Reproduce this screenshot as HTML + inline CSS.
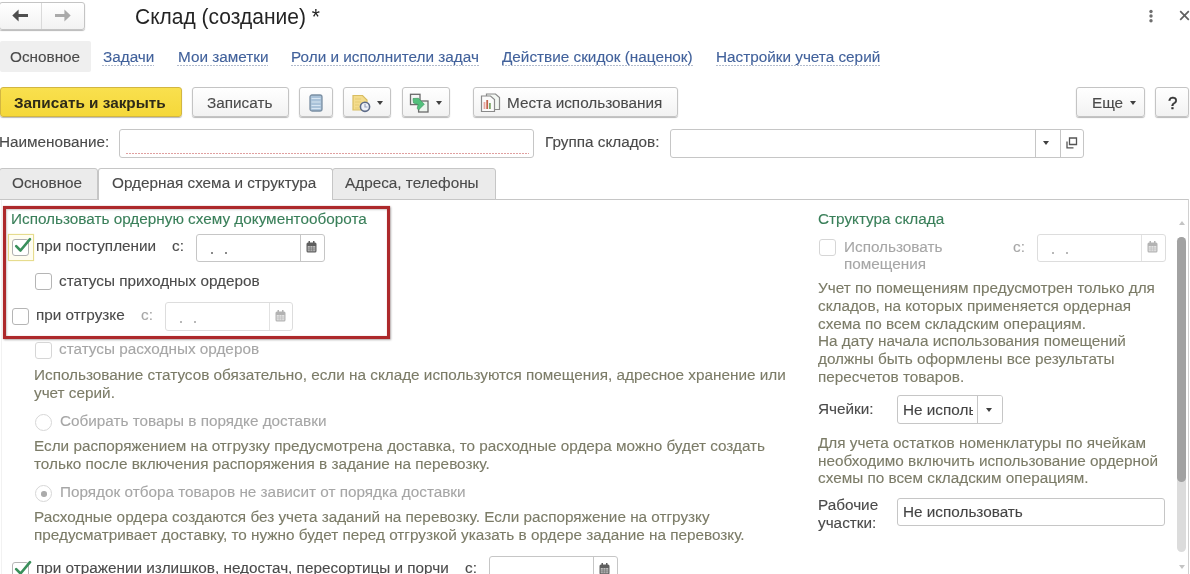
<!DOCTYPE html>
<html><head><meta charset="utf-8">
<style>
html,body{-webkit-font-smoothing:antialiased;margin:0;padding:0;background:#fff;width:1190px;height:574px;overflow:hidden;position:relative;font-family:"Liberation Sans",sans-serif;}
#root{position:absolute;left:0;top:0;width:1190px;height:574px;will-change:transform;overflow:hidden;}
.a{position:absolute;box-sizing:border-box;}
svg.a{overflow:visible;}
.t{position:absolute;white-space:nowrap;line-height:20px;font-size:15.3px;color:#4a4a4a;-webkit-text-stroke:0.12px currentColor;}
.lnk{color:#41619b;}
.und{position:absolute;height:1px;background:repeating-linear-gradient(90deg,#b3bccd 0 2px,transparent 2px 3px);}
.btn{position:absolute;box-sizing:border-box;border:1px solid #c4c4c4;border-radius:3px;background:linear-gradient(#ffffff,#f2f2f2);box-shadow:0 1px 1px rgba(0,0,0,0.28);}
.inp{position:absolute;box-sizing:border-box;border:1px solid #c6c6c6;border-radius:3px;background:#fff;}
.inpd{border-color:#dddddd;}
.div{position:absolute;top:0;bottom:0;width:1px;background:#c6c6c6;}
.cb{position:absolute;box-sizing:border-box;border:1px solid #b5b5b5;border-radius:3px;background:#fff;width:17px;height:17px;}
.cbd{border-color:#d6d6d6;}
.desc{color:#7b7b67;}
.dis{color:#a6a6a6;}
.grn{color:#397f59;}
.tri{position:absolute;width:0;height:0;border-left:3px solid transparent;border-right:3px solid transparent;border-top:4px solid #404040;}
</style></head><body><div id="root">

<!-- nav buttons -->
<div class="btn" style="left:-1px;top:2px;width:86px;height:28px;">
  <div class="div" style="left:41px;background:#dadada"></div>
</div>
<svg class="a" style="left:12px;top:9px" width="17" height="13" viewBox="0 0 17 13"><path d="M0.3 6.5 L6.6 0.6 L6.6 5.1 L16 5.1 L16 8.1 L6.6 8.1 L6.6 12.6 Z" fill="#4f4f4f"/></svg>
<svg class="a" style="left:54px;top:9px" width="17" height="13" viewBox="0 0 17 13"><path d="M16.7 6.5 L10.4 0.6 L10.4 5.1 L1 5.1 L1 8.1 L10.4 8.1 L10.4 12.6 Z" fill="#aaaaaa"/></svg>

<div class="t" style="left:135px;top:7px;font-size:21px;color:#242424;transform:scaleY(1.04);transform-origin:0 17.3px;-webkit-text-stroke:0;">Склад (создание) *</div>

<!-- right icons -->
<svg class="a" style="left:1148px;top:9px" width="6" height="14" viewBox="0 0 6 14"><circle cx="3" cy="2.5" r="1.7" fill="#6f6f6f"/><circle cx="3" cy="7" r="1.7" fill="#6f6f6f"/><circle cx="3" cy="11.7" r="1.7" fill="#6f6f6f"/></svg>
<svg class="a" style="left:1179px;top:10px" width="11" height="11" viewBox="0 0 11 11"><path d="M1.2 1.2 L9.8 9.8 M9.8 1.2 L1.2 9.8" stroke="#606060" stroke-width="1.7"/></svg>

<!-- link bar -->
<div class="a" style="left:0;top:41px;width:91px;height:31px;background:#efefef;border-radius:2px;"></div>
<div class="t" style="left:10px;top:47px;color:#4a4a4a;">Основное</div>
<div class="t lnk" style="left:103px;top:47px;">Задачи</div><div class="und" style="left:102px;top:65px;width:52px"></div>
<div class="t lnk" style="left:178px;top:47px;">Мои заметки</div><div class="und" style="left:177px;top:65px;width:91px"></div>
<div class="t lnk" style="left:291px;top:47px;">Роли и исполнители задач</div><div class="und" style="left:291px;top:65px;width:188px"></div>
<div class="t lnk" style="left:502px;top:47px;">Действие скидок (наценок)</div><div class="und" style="left:502px;top:65px;width:191px"></div>
<div class="t lnk" style="left:716px;top:47px;">Настройки учета серий</div><div class="und" style="left:716px;top:65px;width:165px"></div>

<!-- toolbar -->
<div class="btn" style="left:0;top:87px;width:182px;height:30px;background:linear-gradient(#f9e04e,#f5d83a);border-color:#d2b642;"></div>
<div class="t" style="left:14px;top:93px;font-weight:bold;font-size:15.3px;color:#2e2a18;-webkit-text-stroke:0;">Записать и закрыть</div>
<div class="btn" style="left:192px;top:87px;width:97px;height:30px;"></div>
<div class="t" style="left:207px;top:93px;">Записать</div>
<div class="btn" style="left:299px;top:87px;width:34px;height:30px;"></div>
<svg class="a" style="left:309px;top:94px" width="14" height="18" viewBox="0 0 14 18">
  <rect x="1" y="1" width="12" height="16" rx="2" fill="#a9c2d9" stroke="#7a8fa3" stroke-width="1.3"/>
  <path d="M2.5 4.5 H11.5 M2.5 8 H11.5 M2.5 11.5 H11.5 M2.5 14.5 H11.5" stroke="#d7e5f2" stroke-width="1.2"/>
</svg>
<div class="btn" style="left:343px;top:87px;width:48px;height:30px;"></div>
<svg class="a" style="left:352px;top:94px" width="20" height="18" viewBox="0 0 20 18">
  <path d="M1 1.5 H10.5 L15 6 V16 H1 Z" fill="#f4dc8c" stroke="#d8bd62" stroke-width="1.2"/>
  <path d="M3 5 H9 M3 8 H9 M3 11 H7 M3 14 H7" stroke="#e6cc74" stroke-width="1"/>
  <circle cx="13" cy="12.8" r="4.6" fill="#eef1f8" stroke="#5d6b88" stroke-width="1.6"/>
  <path d="M13 9.8 V13 H15.5" stroke="#9aa6bf" stroke-width="1.2" fill="none"/>
</svg>
<div class="tri" style="left:377px;top:101px;"></div>
<div class="btn" style="left:402px;top:87px;width:48px;height:30px;"></div>
<svg class="a" style="left:406px;top:90px" width="26" height="24" viewBox="0 0 26 24">
  <rect x="4.5" y="4.3" width="9.5" height="10.3" fill="#f6f6f6" stroke="#6a6a6a" stroke-width="1.3"/>
  <rect x="12.6" y="11" width="9.4" height="11" fill="#eef5ef" stroke="#6a6a6a" stroke-width="1.3"/>
  <path d="M7 8.5 L12.5 8.3 L18.3 14.2 L12.5 20 L11.2 18.2 L12.2 14.5 L7.5 13 Z" fill="#52c07c" stroke="#3e9a60" stroke-width="0.7" stroke-linejoin="round"/>
</svg>
<div class="tri" style="left:436px;top:101px;"></div>
<div class="btn" style="left:473px;top:87px;width:205px;height:30px;"></div>
<svg class="a" style="left:480px;top:93px" width="21" height="20" viewBox="0 0 21 20">
  <path d="M6.5 1 H15.5 L19.5 4.5 V16.5 H6.5 Z" fill="#f3f7f3" stroke="#8a8a8a" stroke-width="1.2"/>
  <path d="M1.5 3 H10.5 L14.5 6.5 V18.5 H1.5 Z" fill="#fbfbfb" stroke="#8a8a8a" stroke-width="1.2"/>
  <rect x="3.6" y="9" width="1.8" height="7" fill="#e8a8a0"/>
  <rect x="6.3" y="7" width="1.8" height="9" fill="#c4624a"/>
  <rect x="9" y="10" width="1.8" height="6" fill="#7ea86a"/>
</svg>
<div class="t" style="left:507px;top:93px;">Места использования</div>
<div class="btn" style="left:1076px;top:87px;width:69px;height:30px;"></div>
<div class="t" style="left:1092px;top:93px;">Еще</div>
<div class="tri" style="left:1130px;top:101px;"></div>
<div class="btn" style="left:1155px;top:87px;width:34px;height:30px;"></div>
<div class="t" style="left:1168px;top:94px;font-size:17px;color:#333;-webkit-text-stroke:0.45px #333;">?</div>

<!-- name row -->
<div class="t" style="left:-1px;top:132px;">Наименование:</div>
<div class="inp" style="left:119px;top:129px;width:415px;height:29px;">
  <div class="a" style="left:6px;top:23px;width:403px;height:1px;background:repeating-linear-gradient(90deg,#e0a0a0 0 2px,transparent 2px 3px);"></div>
</div>
<div class="t" style="left:545px;top:132px;">Группа складов:</div>
<div class="inp" style="left:670px;top:129px;width:414px;height:29px;">
  <div class="div" style="left:364px"></div><div class="div" style="left:389px"></div>
</div>
<div class="tri" style="left:1043px;top:141px;"></div>
<svg class="a" style="left:1066px;top:137px" width="12" height="12" viewBox="0 0 12 12"><path d="M3.5 1 H10.5 V7.5 H3.5 Z M1 4.5 V10.8 H7.5" fill="none" stroke="#555" stroke-width="1.3"/></svg>

<!-- tabs -->
<div class="a" style="left:0;top:199px;width:1189px;height:1px;background:#c6c6c6;"></div>
<div class="a" style="left:1188px;top:199px;width:1px;height:375px;background:#d0d0d0;"></div>
<div class="a" style="left:1px;top:200px;width:1px;height:374px;background:#f2f2f2;"></div>
<div class="a" style="left:-1px;top:168px;width:99px;height:32px;background:#ebebeb;border:1px solid #c6c6c6;border-radius:3px 3px 0 0;"></div>
<div class="a" style="left:98px;top:168px;width:235px;height:32px;background:#fff;border:1px solid #c6c6c6;border-bottom:none;border-radius:3px 3px 0 0;"></div>
<div class="a" style="left:332px;top:168px;width:164px;height:32px;background:#ebebeb;border:1px solid #c6c6c6;border-radius:3px 3px 0 0;"></div>
<div class="t" style="left:12px;top:173px;">Основное</div>
<div class="t" style="left:112px;top:173px;">Ордерная схема и структура</div>
<div class="t" style="left:345px;top:173px;">Адреса, телефоны</div>

<!-- left content -->
<div class="t grn" style="left:11px;top:209px;">Использовать ордерную схему документооборота</div>
<div class="a" style="left:8px;top:234px;width:26px;height:27px;border:1px solid #e6dc8e;background:#fffdf0;box-shadow:0 0 1px #efe6a8;"></div>
<div class="cb" style="left:12px;top:239px;border-color:#b0b0b0"></div>
<svg class="a" style="left:14px;top:237px" width="18" height="16" viewBox="0 0 18 16"><path d="M2.2 9.2 L6.5 13.5 L16 2.2" fill="none" stroke="#3a8f5b" stroke-width="2.6" stroke-linecap="round" stroke-linejoin="round"/></svg>
<div class="t" style="left:36px;top:236px;">при поступлении</div>
<div class="t" style="left:172px;top:236px;">с:</div>
<div class="inp" style="left:196px;top:234px;width:129px;height:28px;"><div class="div" style="left:103px"></div>
  <div class="a" style="left:14px;top:17px;width:2px;height:2px;background:#8a8a8a"></div><div class="a" style="left:28px;top:17px;width:2px;height:2px;background:#8a8a8a"></div></div>
<svg class="a cal" style="left:306px;top:241px" width="11" height="12" viewBox="0 0 11 12"><rect x="0.5" y="1.5" width="10" height="10" rx="1.5" fill="#5e5e5e"/><rect x="1.7" y="5" width="7.6" height="5.3" fill="#bdbdbd"/><path d="M1.7 7 H9.3 M1.7 8.8 H9.3 M4.2 5 V10.3 M6.7 5 V10.3" stroke="#6a6a6a" stroke-width="0.6"/><rect x="2.5" y="0" width="1.5" height="2.5" fill="#5e5e5e"/><rect x="7" y="0" width="1.5" height="2.5" fill="#5e5e5e"/></svg>

<div class="cb" style="left:35px;top:273px;"></div>
<div class="t" style="left:59px;top:271px;">статусы приходных ордеров</div>

<div class="cb" style="left:12px;top:308px;"></div>
<div class="t" style="left:36px;top:305px;">при отгрузке</div>
<div class="t dis" style="left:141px;top:305px;">с:</div>
<div class="inp inpd" style="left:165px;top:302px;width:128px;height:29px;"><div class="div" style="left:103px;background:#e2e2e2"></div>
  <div class="a" style="left:14px;top:18px;width:2px;height:2px;background:#b8b8b8"></div><div class="a" style="left:28px;top:18px;width:2px;height:2px;background:#b8b8b8"></div></div>
<svg class="a" style="left:275px;top:310px" width="11" height="12" viewBox="0 0 11 12"><rect x="0.5" y="1.5" width="10" height="10" rx="1.5" fill="#b3b3b3"/><rect x="1.7" y="5" width="7.6" height="5.3" fill="#e3e3e3"/><path d="M1.7 7 H9.3 M1.7 8.8 H9.3 M4.2 5 V10.3 M6.7 5 V10.3" stroke="#b8b8b8" stroke-width="0.6"/><rect x="2.5" y="0" width="1.5" height="2.5" fill="#b3b3b3"/><rect x="7" y="0" width="1.5" height="2.5" fill="#b3b3b3"/></svg>

<div class="cb cbd" style="left:35px;top:342px;"></div>
<div class="t dis" style="left:59px;top:339px;">статусы расходных ордеров</div>

<div class="t desc" style="left:34px;top:365px;">Использование статусов обязательно, если на складе используются помещения, адресное хранение или</div>
<div class="t desc" style="left:34px;top:383px;">учет серий.</div>
<div class="a" style="left:35px;top:414px;width:17px;height:17px;border:1.3px solid #d6d6d6;border-radius:50%;"></div>
<div class="t dis" style="left:60px;top:411px;">Собирать товары в порядке доставки</div>
<div class="t desc" style="left:34px;top:436px;">Если распоряжением на отгрузку предусмотрена доставка, то расходные ордера можно будет создать</div>
<div class="t desc" style="left:34px;top:454px;">только после включения распоряжения в задание на перевозку.</div>
<div class="a" style="left:35px;top:485px;width:17px;height:17px;border:1.3px solid #d6d6d6;border-radius:50%;"></div>
<div class="a" style="left:41px;top:491px;width:5.5px;height:5.5px;background:#ababab;border-radius:50%;"></div>
<div class="t dis" style="left:60px;top:482px;">Порядок отбора товаров не зависит от порядка доставки</div>
<div class="t desc" style="left:34px;top:507px;">Расходные ордера создаются без учета заданий на перевозку. Если распоряжение на отгрузку</div>
<div class="t desc" style="left:34px;top:525px;">предусматривает доставку, то нужно будет перед отгрузкой указать в ордере задание на перевозку.</div>
<div class="cb" style="left:12px;top:562px;"></div>
<svg class="a" style="left:14px;top:560px" width="18" height="16" viewBox="0 0 18 16"><path d="M2.2 9.2 L6.5 13.5 L16 2.2" fill="none" stroke="#3a8f5b" stroke-width="2.6" stroke-linecap="round" stroke-linejoin="round"/></svg>
<div class="t" style="left:36px;top:558px;">при отражении излишков, недостач, пересортицы и порчи</div>
<div class="t" style="left:465px;top:558px;">с:</div>
<div class="inp" style="left:489px;top:556px;width:129px;height:28px;"><div class="div" style="left:103px"></div>
  <div class="a" style="left:14px;top:17px;width:2px;height:2px;background:#8a8a8a"></div><div class="a" style="left:28px;top:17px;width:2px;height:2px;background:#8a8a8a"></div></div>
<svg class="a" style="left:599px;top:563px" width="11" height="12" viewBox="0 0 11 12"><rect x="0.5" y="1.5" width="10" height="10" rx="1.5" fill="#5e5e5e"/><rect x="1.7" y="5" width="7.6" height="5.3" fill="#bdbdbd"/><path d="M1.7 7 H9.3 M1.7 8.8 H9.3 M4.2 5 V10.3 M6.7 5 V10.3" stroke="#6a6a6a" stroke-width="0.6"/><rect x="2.5" y="0" width="1.5" height="2.5" fill="#5e5e5e"/><rect x="7" y="0" width="1.5" height="2.5" fill="#5e5e5e"/></svg>

<!-- right content -->
<div class="t grn" style="left:818px;top:209px;">Структура склада</div>
<div class="cb cbd" style="left:819px;top:239px;"></div>
<div class="t dis" style="left:844px;top:237px;">Использовать</div>
<div class="t dis" style="left:844px;top:254px;">помещения</div>
<div class="t dis" style="left:1013px;top:237px;">с:</div>
<div class="inp inpd" style="left:1037px;top:234px;width:129px;height:28px;"><div class="div" style="left:103px;background:#e2e2e2"></div>
  <div class="a" style="left:14px;top:17px;width:2px;height:2px;background:#b8b8b8"></div><div class="a" style="left:28px;top:17px;width:2px;height:2px;background:#b8b8b8"></div></div>
<svg class="a" style="left:1147px;top:241px" width="11" height="12" viewBox="0 0 11 12"><rect x="0.5" y="1.5" width="10" height="10" rx="1.5" fill="#b3b3b3"/><rect x="1.7" y="5" width="7.6" height="5.3" fill="#e3e3e3"/><path d="M1.7 7 H9.3 M1.7 8.8 H9.3 M4.2 5 V10.3 M6.7 5 V10.3" stroke="#b8b8b8" stroke-width="0.6"/><rect x="2.5" y="0" width="1.5" height="2.5" fill="#b3b3b3"/><rect x="7" y="0" width="1.5" height="2.5" fill="#b3b3b3"/></svg>
<div class="t desc" style="left:818px;top:278px;">Учет по помещениям предусмотрен только для</div>
<div class="t desc" style="left:818px;top:296px;">складов, на которых применяется ордерная</div>
<div class="t desc" style="left:818px;top:314px;">схема по всем складским операциям.</div>
<div class="t desc" style="left:818px;top:331px;">На дату начала использования помещений</div>
<div class="t desc" style="left:818px;top:349px;">должны быть оформлены все результаты</div>
<div class="t desc" style="left:818px;top:367px;">пересчетов товаров.</div>
<div class="t" style="left:818px;top:399px;">Ячейки:</div>
<div class="inp" style="left:897px;top:395px;width:106px;height:29px;overflow:hidden;"><div class="t" style="left:5px;top:4px;color:#444;">Не исполь</div><div class="a" style="left:75px;top:0;width:30px;height:28px;background:#fff;"></div><div class="a" style="left:79px;top:0;width:1px;height:28px;background:#c6c6c6;"></div></div>
<div class="tri" style="left:986px;top:408px;"></div>
<div class="t desc" style="left:818px;top:433px;">Для учета остатков номенклатуры по ячейкам</div>
<div class="t desc" style="left:818px;top:451px;">необходимо включить использование ордерной</div>
<div class="t desc" style="left:818px;top:468px;">схемы по всем складским операциям.</div>
<div class="t" style="left:818px;top:495px;">Рабочие</div>
<div class="t" style="left:818px;top:513px;">участки:</div>
<div class="inp" style="left:897px;top:498px;width:268px;height:28px;"><div class="t" style="left:5px;top:3px;color:#444;">Не использовать</div></div>

<!-- scrollbar -->
<div class="tri" style="left:1179px;top:221px;border-top:none;border-bottom:4px solid #c4c4c4;"></div>
<div class="a" style="left:1177px;top:237px;width:9px;height:315px;background:#dcdcdc;border-radius:5px;"></div>
<div class="a" style="left:1177px;top:237px;width:9px;height:245px;background:#a2a2a2;border-radius:5px;"></div>
<div class="tri" style="left:1179px;top:565px;border-top-color:#c4c4c4;"></div>

<!-- red annotation -->
<div class="a" style="left:3px;top:206px;width:387px;height:133px;border:3px solid #ad292b;box-shadow:1px 1px 2px rgba(0,0,0,0.3), 0 0 1px rgba(210,90,90,0.6), inset 1px 1px 2px rgba(0,0,0,0.18), inset 0 0 1px rgba(210,90,90,0.6);"></div>

</div></body></html>
